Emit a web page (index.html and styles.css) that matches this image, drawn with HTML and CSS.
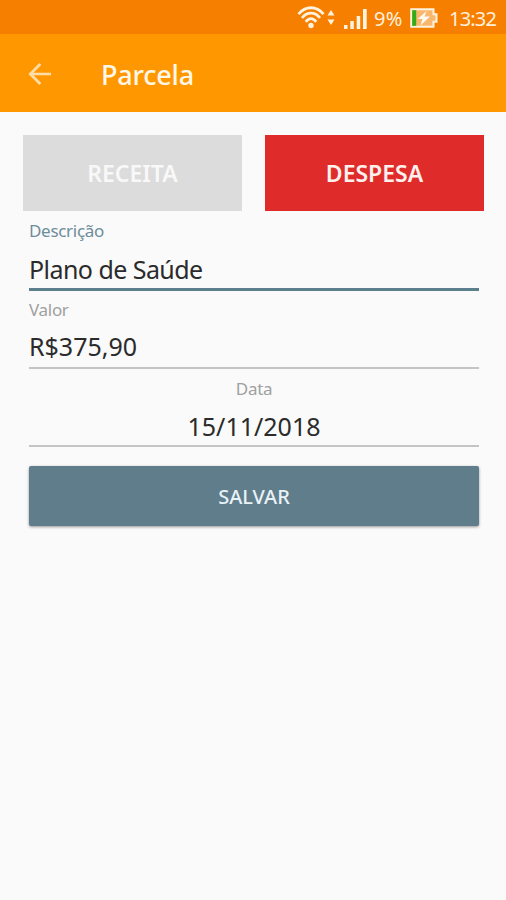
FILE: index.html
```html
<!DOCTYPE html>
<html lang="pt-br">

<head>
    <meta charset="UTF-8">
    <meta name="viewport" content="width=device-width, initial-scale=1.0">
    <title>Parcela</title>
    <link rel="stylesheet" href="styles.css">
</head>

<body>
    <div class="status-bar">
        <svg class="wifi" width="38" height="24" viewBox="0 0 38 24">
            <g fill="none" stroke="#fff3e0" stroke-width="2.8">
                <path d="M1.5 9.2C8.5 .6 19.5 .6 26.5 9.2" />
                <path d="M5 13C10 6.6 18 6.6 23 13" />
                <path d="M8.8 16.8C12 12.6 16 12.6 19.2 16.8" />
            </g>
            <circle cx="14" cy="20.5" r="2.7" fill="#fff3e0" />
            <path d="M30.5 10.5L34 5l3.500 5.500zM30.5 14.500h7L34 20z" fill="#fff3e0" />
        </svg>
        <svg class="signal" width="23" height="20" viewBox="0 0 23 20">
            <path d="M0 16h3.500v4H0zM6.300 12h3.500v8H6.300zM12.700 7h3.500v13h-3.500zM19 0h3.700v20H19z" fill="#fff3e0" />
        </svg>
        <span class="percent">9%</span>
        <svg class="battery" width="28" height="20" viewBox="0 0 28 20">
            <path d="M1.200 1.200h22.300v5h3v7.600h-3v5H1.200z" fill="#f8b76c" stroke="#fff3e0" stroke-width="2" />
            <path d="M2.200 2.200h4v15.600h-4z" fill="#2fac17" />
            <path d="M16.500 3L7.500 11h5l-2 6.500 9.500-9h-5.500z" fill="#fffaf0" />
        </svg>
        <span class="clock">13:32</span>
    </div>

    <header class="toolbar">
        <svg class="back" width="24" height="24" viewBox="0 0 24 24">
            <path d="M23 12H2.500M12.300 2L2.300 12l10 10" fill="none" stroke="#ffddaa" stroke-width="2.700" />
        </svg>
        <h1>Parcela</h1>
    </header>

    <main>
        <div class="tipos">
            <button class="tipo receita">RECEITA</button>
            <button class="tipo despesa">DESPESA</button>
        </div>

        <div class="campo ativo">
            <span class="label">Descrição</span>
            <span class="valor">Plano de Saúde</span>
        </div>
        <div class="campo preco">
            <span class="label">Valor</span>
            <span class="valor">R$375,90</span>
        </div>
        <div class="campo data">
            <span class="label">Data</span>
            <span class="valor">15/11/2018</span>
        </div>

        <button class="salvar">SALVAR</button>
    </main>
</body>

</html>
```
FILE: styles.css
```css
* {
    box-sizing: border-box;
}

body {
    margin: 0;
    height: 900px;
    background: #fafafa;
    font-family: "Noto Sans", sans-serif;
    overflow: hidden;
}

.status-bar {
    display: flex;
    justify-content: flex-end;
    align-items: center;
    height: 34px;
    padding: 2px 10px 0 0;
    background: #f77f00;
    color: #fff0dc;
    line-height: 30px;
}

.wifi {
    margin-top: -2px;
}

.signal {
    margin: 2px 7px 0 9px;
}

.percent {
    width: 30px;
    padding-top: 2px;
    font-size: 20px;
    letter-spacing: 0.2px;
}

.battery {
    margin: 0 11px 0 6px;
}

.clock {
    width: 47px;
    padding-top: 2px;
    font-size: 20px;
    letter-spacing: -0.8px;
    white-space: nowrap;
}

.toolbar {
    display: flex;
    align-items: center;
    height: 78px;
    padding: 2px 28px 0;
    background: #ff9800;
}

.toolbar h1 {
    margin: 0 0 0 49px;
    font-size: 27px;
    font-weight: 500;
    letter-spacing: -0.2px;
    color: #fff7e8;
}

main {
    padding: 23px 22px 0 23px;
}

button {
    padding: 0;
    border: none;
    font-family: inherit;
    cursor: pointer;
}

.tipos {
    display: flex;
    gap: 23px;
}

.tipo {
    flex: 1;
    height: 76px;
    font-size: 23px;
    font-weight: 600;
    letter-spacing: 0;
}

.receita {
    background: #dcdcdc;
    color: #f8f8f8;
}

.despesa {
    background: #e02b2b;
    color: #fff0ee;
}

.campo {
    display: flex;
    flex-direction: column;
    height: 78px;
    margin: 0 5px 0 6px;
    border-bottom: 2px solid #c4c4c4;
}

.ativo {
    height: 80px;
    border-bottom: 3px solid #5c7f8e;
}

.label {
    padding-top: 8px;
    font-size: 17px;
    line-height: 24px;
    letter-spacing: -0.3px;
    color: #a0a0a0;
}

.ativo .label {
    color: #6d8d9a;
}

.valor {
    padding-top: 8px;
    font-size: 25px;
    line-height: 34px;
    color: #2b2b2b;
}

.ativo .valor {
    padding-top: 9px;
    letter-spacing: -0.55px;
}

.preco .label,
.preco .valor {
    padding-top: 7px;
}

.data {
    text-align: center;
}

.salvar {
    display: block;
    width: 450px;
    height: 60px;
    margin: 19px 0 0 6px;
    border-radius: 2px;
    background: #607d8b;
    box-shadow: 0 1px 3px rgba(0, 0, 0, 0.4);
    color: #e9f2f6;
    font-size: 20px;
    font-weight: 500;
}
```
